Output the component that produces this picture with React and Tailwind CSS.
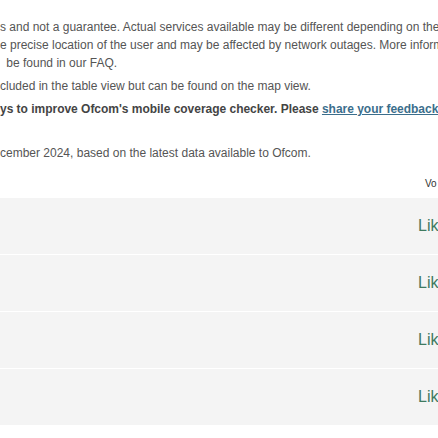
export default function App() {
  const rows = [0, 1, 2, 3];
  return (
    <div className="w-[438px] h-[438px] overflow-hidden bg-white relative" style={{ fontFamily: '"Liberation Sans", Arial, sans-serif' }}>
      <div className="pt-[18px] text-[12px] leading-[18px] text-[#555555] whitespace-nowrap">
        <div>s and not a guarantee. Actual services available may be different depending on the</div>
        <div>e precise location of the user and may be affected by network outages. More information</div>
        <div className="pl-[3px]">&nbsp;be found in our FAQ.</div>
        <div className="mt-[5px]">cluded in the table view but can be found on the map view.</div>
        <div className="mt-[5px] font-bold text-[#444444] tracking-[-0.02px]">
          ys to improve Ofcom's mobile coverage checker. Please{" "}
          <span className="underline text-[#3b6e8c]">share your feedback</span>
        </div>
        <div className="mt-[26px]">cember 2024, based on the latest data available to Ofcom.</div>
      </div>
      <div className="mt-[13px] h-[18px] flex">
        <span className="text-[10px] leading-[18px] text-[#333333] pl-[425px] whitespace-nowrap">Vo</span>
      </div>
      <div className="mt-[5px] flex flex-col">
        {rows.map((r) => (
          <div key={r} className="h-[57px] border-b border-white bg-[#f4f4f4] flex items-center pl-[418px]">
            <span className="text-[16px] text-[#3f7a5f] whitespace-nowrap">Likely</span>
          </div>
        ))}
      </div>
    </div>
  );
}
